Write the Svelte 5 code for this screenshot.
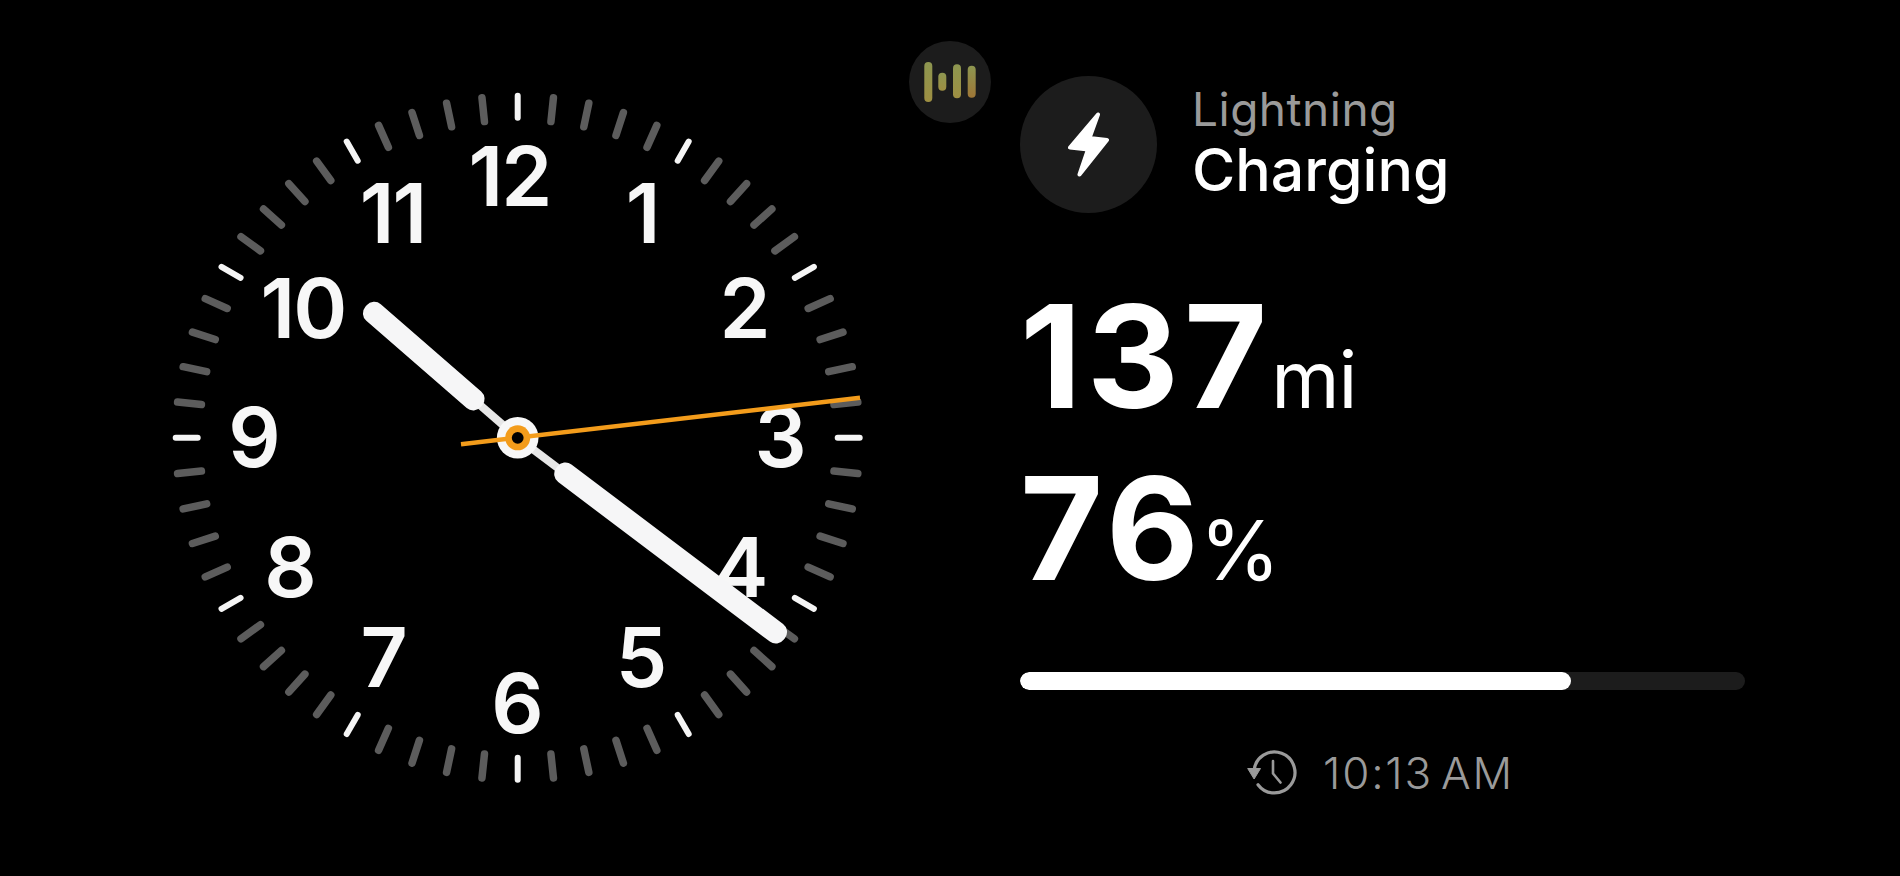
<script>
  const cx = 517.7, cy = 437.8;
  const ticks = Array.from({ length: 60 }, (_, i) => {
    const a = (i * 6 * Math.PI) / 180;
    const major = i % 5 === 0;
    const r1 = 342, r2 = major ? 320 : 318;
    return {
      major,
      x1: cx + r1 * Math.sin(a), y1: cy - r1 * Math.cos(a),
      x2: cx + r2 * Math.sin(a), y2: cy - r2 * Math.cos(a)
    };
  });
  const numerals = [
    { t: '12', x: 509.5, y: 206 }, { t: '11', x: 392.5, y: 242.5 }, { t: '1', x: 642, y: 242.5 },
    { t: '10', x: 303, y: 338 }, { t: '2', x: 744, y: 338 }, { t: '9', x: 253.5, y: 467 },
    { t: '3', x: 779.5, y: 467 }, { t: '8', x: 289.5, y: 597 }, { t: '4', x: 740, y: 597 },
    { t: '7', x: 383, y: 687 }, { t: '5', x: 640.5, y: 687 }, { t: '6', x: 516.5, y: 733 }
  ];
  const bars = [
    { x: 924.3, y: 62, h: 40, fill: 'url(#barA)' }, { x: 938.3, y: 72.7, h: 18, fill: 'url(#barA)' },
    { x: 953, y: 64.3, h: 34, fill: 'url(#barA)' }, { x: 967.7, y: 65.7, h: 32, fill: 'url(#barB)' }
  ];
</script>

<div class="page">
  <section class="clock-col">
    <svg class="clock" viewBox="0 0 1020 876" width="1020" height="876" aria-label="Analog clock">
      {#each ticks as k}
        <line class={k.major ? 'tick major' : 'tick'} x1={k.x1} y1={k.y1} x2={k.x2} y2={k.y2} />
      {/each}
      {#each numerals as n}
        <text class="numeral" x={n.x} y={n.y}>{n.t}</text>
      {/each}

      <g transform="translate({cx} {cy}) rotate(-139)">
        <rect class="neck" x="0" y="-4" width="60" height="8" />
        <rect class="hand" x="48" y="-11" width="153" height="22" rx="10" />
      </g>
      <g transform="translate({cx} {cy}) rotate(37)">
        <rect class="neck" x="0" y="-4" width="60" height="8" />
        <rect class="hand" x="49" y="-11" width="285" height="22" rx="10" />
      </g>

      <circle cx={cx} cy={cy} r="20.8" fill="#f7f7f7" />
      <line class="second" x1="461" y1="444.3" x2="860" y2="397.7" />
      <circle cx={cx} cy={cy} r="12.5" fill="#f39c1b" />
      <circle cx={cx} cy={cy} r="5.9" fill="#000" />
    </svg>
  </section>

  <section class="info">
    <svg class="activity" viewBox="909 41 82 82" width="82" height="82" aria-hidden="true">
      <defs>
        <linearGradient id="barA" x1="0" y1="0" x2="0" y2="1">
          <stop offset="0" stop-color="#8d9650" />
          <stop offset="1" stop-color="#9e8f42" />
        </linearGradient>
        <linearGradient id="barB" x1="0" y1="0" x2="0" y2="1">
          <stop offset="0" stop-color="#8d9650" />
          <stop offset="1" stop-color="#9e7636" />
        </linearGradient>
      </defs>
      <circle cx="950" cy="82" r="41" fill="#1c1c1c" />
      {#each bars as b}
        <rect x={b.x} y={b.y} width="8" height={b.h} rx="4" fill={b.fill} />
      {/each}
    </svg>

    <header class="head">
      <div class="bolt-badge">
        <svg viewBox="0 0 41 65" width="41" height="65" aria-hidden="true">
          <path d="M30 2.5 L2 35.5 L20 37.5 L11.5 62.5 L39 28 L21.5 26 Z" fill="#fff" stroke="#fff" stroke-width="4" stroke-linejoin="round" />
        </svg>
      </div>
      <div class="titles">
        <div class="source">Lightning</div>
        <div class="status">Charging</div>
      </div>
    </header>

    <div class="metric range"><span class="value">137</span><span class="unit">mi</span></div>
    <div class="metric level"><span class="value">76</span><span class="unit pct">%</span></div>

    <div class="track"><div class="fill" style="width: {(551 / 724.6) * 100}%"></div></div>

    <footer class="eta">
      <svg viewBox="0 0 50 46" width="50" height="46" aria-hidden="true">
        <path d="M7 21 A20.5 20.5 0 1 1 11 34.7" fill="none" stroke="#9a9a9a" stroke-width="3.2" stroke-linecap="round" />
        <path d="M0.7 18.5 L13.5 18.5 L7.1 29 Z" fill="#9a9a9a" stroke="#9a9a9a" stroke-width="1" stroke-linejoin="round" />
        <path d="M26 11 V23.5 L33.5 32.5" fill="none" stroke="#9a9a9a" stroke-width="2.6" stroke-linecap="round" stroke-linejoin="round" />
      </svg>
      <span>10:13 AM</span>
    </footer>
  </section>
</div>

<style>
  :global(body) {
    margin: 0;
    background: #000;
  }
  .page {
    display: flex;
    width: 1900px;
    height: 876px;
    overflow: hidden;
    background: #000;
    color: #fff;
    font-family: Inter, "Liberation Sans", sans-serif;
  }
  .clock-col {
    flex: 0 0 1020px;
  }
  .clock {
    display: block;
  }
  .tick {
    stroke: #5c5c5c;
    stroke-width: 7.5;
    stroke-linecap: round;
  }
  .tick.major {
    stroke: #f5f5f5;
    stroke-width: 6;
  }
  .numeral {
    fill: #f7f7f7;
    font-family: Inter, "Liberation Sans", sans-serif;
    font-size: 82px;
    font-weight: 600;
    letter-spacing: -2px;
    text-anchor: middle;
  }
  .neck {
    fill: #e6e6e6;
  }
  .hand {
    fill: #f6f6f7;
  }
  .second {
    stroke: #f39c1b;
    stroke-width: 4.5;
  }
  .info {
    position: relative;
    flex: 0 0 725px;
    padding-top: 76px;
    box-sizing: border-box;
    height: 876px;
  }
  .activity {
    position: absolute;
    left: -111px;
    top: 41px;
  }
  .head {
    display: flex;
    align-items: center;
    gap: 35px;
    height: 137px;
  }
  .bolt-badge {
    display: flex;
    align-items: center;
    justify-content: center;
    width: 137px;
    height: 137px;
    border-radius: 50%;
    background: #1c1c1c;
  }
  .titles {
    display: flex;
    flex-direction: column;
    margin-top: -3px;
  }
  .source {
    font-size: 46px;
    line-height: 54px;
    color: #9a9a9a;
    letter-spacing: 0.5px;
  }
  .status {
    font-size: 59px;
    line-height: 68px;
    font-weight: 500;
  }
  .metric {
    display: flex;
    align-items: baseline;
    font-weight: 700;
  }
  .range {
    margin-top: 81px;
    height: 124px;
    line-height: 124px;
  }
  .level {
    margin-top: 48px;
    height: 124px;
    line-height: 124px;
  }
  .value {
    font-size: 143px;
    letter-spacing: 5px;
  }
  .unit {
    font-size: 78px;
    font-weight: 400;
    letter-spacing: -1px;
    margin-left: -1px;
  }
  .unit.pct {
    margin-left: -4px;
    font-size: 82px;
    letter-spacing: 0;
  }
  .track {
    margin-top: 82px;
    height: 18px;
    border-radius: 9px;
    background: #1c1c1c;
    overflow: hidden;
  }
  .fill {
    height: 100%;
    border-radius: 9px;
    background: #fff;
  }
  .eta {
    display: flex;
    align-items: center;
    justify-content: center;
    gap: 26px;
    margin-top: 60px;
    padding-right: 4px;
    color: #9a9a9a;
    font-size: 44px;
    font-weight: 300;
    letter-spacing: 1.8px;
    word-spacing: -6px;
    line-height: 46px;
  }
</style>
